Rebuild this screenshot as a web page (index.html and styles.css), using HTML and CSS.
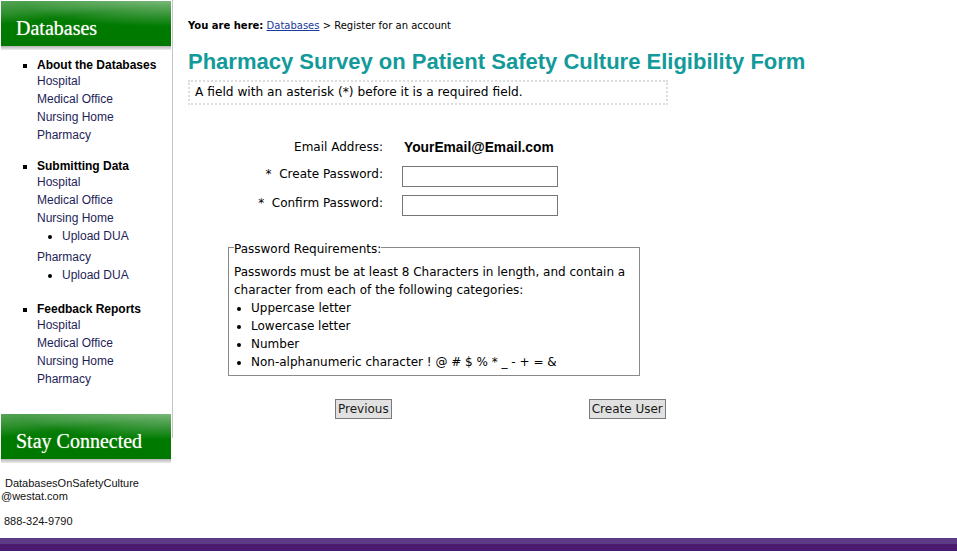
FILE: index.html
```html
<!DOCTYPE html>
<html lang="en">
<head>
<meta charset="utf-8">
<title>Register for an account</title>
<link rel="stylesheet" href="styles.css">
</head>
<body>
<div class="page">
  <aside class="sidebar">
    <div class="side-head">Databases</div>
    <div class="shade"></div>
    <ul class="nav">
      <li class="sec"><span class="sec-title">About the Databases</span>
        <ul class="sub">
          <li><a href="#">Hospital</a></li>
          <li><a href="#">Medical Office</a></li>
          <li><a href="#">Nursing Home</a></li>
          <li><a href="#">Pharmacy</a></li>
        </ul>
      </li>
      <li class="sec"><span class="sec-title">Submitting Data</span>
        <ul class="sub">
          <li><a href="#">Hospital</a></li>
          <li><a href="#">Medical Office</a></li>
          <li><a href="#">Nursing Home</a>
            <ul class="subsub"><li><a href="#">Upload DUA</a></li></ul>
          </li>
          <li><a href="#">Pharmacy</a>
            <ul class="subsub"><li><a href="#">Upload DUA</a></li></ul>
          </li>
        </ul>
      </li>
      <li class="sec"><span class="sec-title">Feedback Reports</span>
        <ul class="sub">
          <li><a href="#">Hospital</a></li>
          <li><a href="#">Medical Office</a></li>
          <li><a href="#">Nursing Home</a></li>
          <li><a href="#">Pharmacy</a></li>
        </ul>
      </li>
    </ul>
    <div class="side-head stay">Stay Connected</div>
    <div class="shade"></div>
    <div class="contact">
      <p class="mail"><span class="mail-1">DatabasesOnSafetyCulture</span><br>@westat.com</p>
      <p class="phone">888-324-9790</p>
    </div>
  </aside>

  <main class="main">
    <div class="crumbs"><b>You are here:</b> <a href="#">Databases</a> &gt; Register for an account</div>
    <h1 class="title">Pharmacy Survey on Patient Safety Culture Eligibility Form</h1>
    <div class="note">A field with an asterisk (*) before it is a required field.</div>

    <form class="form">
      <div class="grid">
        <label class="lbl lbl-email">Email Address:</label>
        <div class="email">YourEmail@Email.com</div>
        <label class="lbl">*&nbsp; Create Password:</label>
        <input class="field" type="password">
        <label class="lbl">*&nbsp; Confirm Password:</label>
        <input class="field" type="password">
      </div>

      <fieldset class="req">
        <legend>Password Requirements:</legend>
        <p>Passwords must be at least 8 Characters in length, and contain a character from each of the following categories:</p>
        <ul>
          <li>Uppercase letter</li>
          <li>Lowercase letter</li>
          <li>Number</li>
          <li>Non-alphanumeric character ! @ # $ % * _ - + = &amp;</li>
        </ul>
      </fieldset>

      <div class="actions">
        <button type="button" class="btn">Previous</button>
        <button type="button" class="btn">Create User</button>
      </div>
    </form>
  </main>
</div>
<div class="footer">
  <div class="footer-top"></div>
  <div class="footer-bottom"></div>
</div>
</body>
</html>
```

FILE: styles.css
```css
html, body {
  margin: 0;
  padding: 0;
  background: #fff;
}

body {
  font-family: "DejaVu Sans", Verdana, sans-serif;
  color: #000;
}

.page {
  display: flex;
  height: 538px;
  overflow: hidden;
}

/* ---------- sidebar ---------- */
.sidebar {
  width: 173px;
  flex: none;
  padding-top: 1px;
  box-sizing: border-box;
  background: linear-gradient(#c6c6c6, #c6c6c6) no-repeat right top / 1px 438px;
  font-family: "Liberation Sans", Arial, sans-serif;
}

.side-head {
  margin-left: 1px;
  width: 170px;
  height: 45px;
  box-sizing: border-box;
  padding: 9px 0 0 15px;
  line-height: 36px;
  font-family: "Liberation Serif", "Times New Roman", serif;
  font-size: 20px;
  color: #fff;
  text-shadow: 0 0 1px rgba(255, 255, 230, 0.6);
  background:
    linear-gradient(173deg, rgba(255,255,255,0.24) 0%, rgba(255,255,255,0.12) 22%, rgba(255,255,255,0) 36%),
    radial-gradient(ellipse 150px 26px at 100% 0%, rgba(255,255,255,0.38), rgba(255,255,255,0) 100%),
    linear-gradient(to bottom, #1f871f 0%, #0b7e0b 30%, #007a00 55%, #007800 100%);
}

.stay {
  margin-top: 26px;
}

.shade {
  margin-left: 1px;
  width: 170px;
  height: 4px;
  background: linear-gradient(#b4b4b4, #ececec);
}

.nav {
  list-style: square;
  margin: 0;
  padding: 8px 0 0 37px;
  font-size: 12px;
}

.sec + .sec {
  margin-top: 15px;
}

.sec-title {
  display: block;
  line-height: 14px;
  font-weight: bold;
  color: #000;
}

.sub {
  list-style: none;
  margin: 0;
  padding: 0;
}

.sub li {
  line-height: 18px;
}

.sub a {
  color: #1e1e58;
  text-decoration: none;
}

.subsub {
  list-style: disc;
  margin: 0;
  padding: 0 0 3px 25px;
}

.contact {
  font-size: 11px;
  color: #111;
}

.contact p {
  margin: 0;
  line-height: 13px;
}

.mail {
  margin-top: 14px !important;
  padding-left: 1px;
}

.mail-1 {
  padding-left: 4px;
}

.phone {
  margin-top: 12px !important;
  padding-left: 4px;
}

/* ---------- main ---------- */
.main {
  flex: 1;
  padding: 19px 0 0 15px;
}

.crumbs {
  font-size: 10px;
  line-height: 14px;
}

.crumbs a {
  color: #1a3a9c;
  text-decoration: underline;
}

.title {
  margin: 16px 0 0;
  font-family: "Liberation Sans", Arial, sans-serif;
  font-size: 22px;
  line-height: 26px;
  font-weight: bold;
  color: #139a9a;
}

.note {
  margin-top: 5px;
  width: 480px;
  height: 25px;
  box-sizing: border-box;
  border: 2px dotted #dcdcdc;
  padding-left: 5px;
  font-size: 12.2px;
  line-height: 21px;
}

.form {
  margin: 34px 0 0;
}

.grid {
  display: grid;
  grid-template-columns: 195px 156px;
  grid-template-rows: 27px 29px 21px;
  column-gap: 19px;
  align-items: start;
}

.lbl {
  padding-top: 1px;
  text-align: right;
  font-size: 12px;
  line-height: 14px;
}

.email {
  padding: 1px 0 0 2px;
  font-family: "Liberation Sans", Arial, sans-serif;
  font-weight: bold;
  font-size: 13.8px;
  line-height: 16px;
}

.field {
  margin: 0;
  width: 156px;
  height: 21px;
  box-sizing: border-box;
  border: 1px solid #767676;
  padding: 0 3px;
  background: #fff;
}

.req {
  margin: 22px 0 0 40px;
  width: 412px;
  box-sizing: border-box;
  border: 1px solid #8a8a8a;
  padding: 0 4px 4px 5px;
  font-size: 12px;
  line-height: 18px;
}

.req legend {
  padding: 4px 0 0;
  line-height: 15px;
}

.req p {
  margin: 6px 0 0;
}

.req ul {
  margin: 0;
  padding-left: 17px;
}

.actions {
  display: flex;
  gap: 197px;
  margin-top: 23px;
  padding-left: 147px;
}

.btn {
  margin: 0;
  height: 20px;
  box-sizing: border-box;
  padding: 0 2px;
  border: 1px solid #7a7a7a;
  background: #e1e1e1;
  font-family: "DejaVu Sans", Verdana, sans-serif;
  font-size: 12px;
  line-height: 16px;
  color: #1a1a1a;
}

/* ---------- footer ---------- */
.footer-top {
  height: 6px;
  background: #5d3b86;
}

.footer-bottom {
  height: 7px;
  background: #4a1b6e;
}
```
